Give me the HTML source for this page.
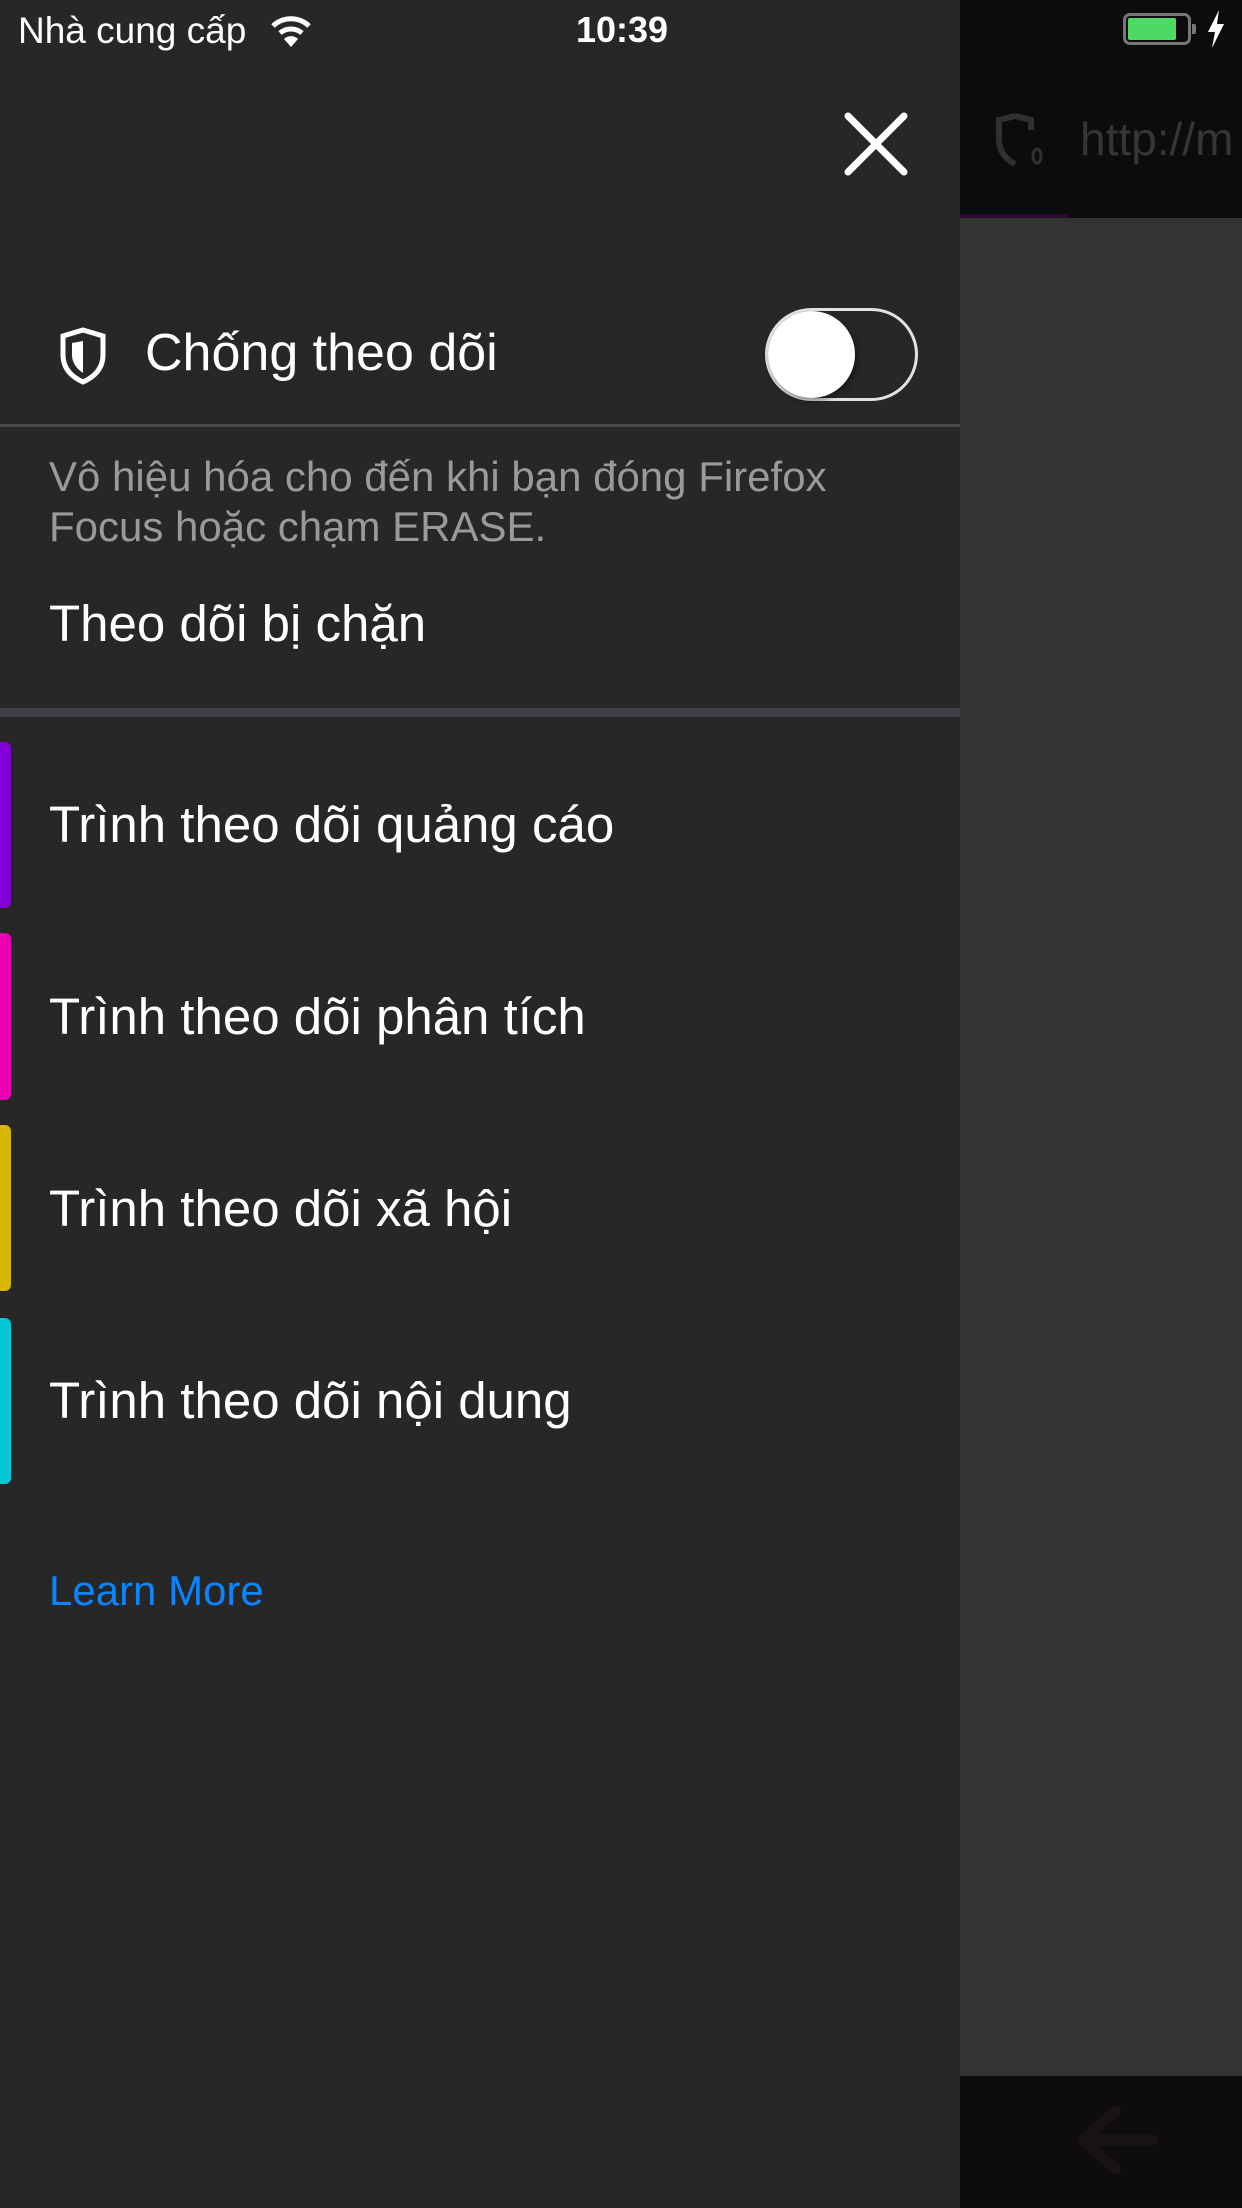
<!DOCTYPE html>
<html><head><meta charset="utf-8"><style>
*{margin:0;padding:0;box-sizing:border-box}
body{width:1242px;height:2208px;background:#272727;position:relative;overflow:hidden;font-family:"Liberation Sans","DejaVu Sans",sans-serif;color:#fff}
.a{position:absolute;white-space:nowrap}
</style></head><body>
<div class="a" style="left:960px;top:0;width:282px;height:218px;background:#0c0b0e"></div>
<div class="a" style="left:960px;top:214px;width:110px;height:12px;background:#2c0a30;border-radius:0 6px 6px 0"></div>
<div class="a" style="left:960px;top:218px;width:282px;height:1858px;background:#333"></div>
<div class="a" style="left:960px;top:2076px;width:282px;height:132px;background:#0f0c0f"></div>
<svg class="a" style="left:1075px;top:2105px" width="85" height="70"><path d="M40 6 L8 35 L40 64 M8 35 L77 35" stroke="#171317" stroke-width="11" fill="none" stroke-linecap="round" stroke-linejoin="round"/></svg>
<svg class="a" style="left:995px;top:112px" width="50" height="56"><path d="M20 4 L36 8 L36 18 M20 4 L4 8 L4 28 C4 40 12 48 20 52" stroke="#303030" stroke-width="6" fill="none"/><ellipse cx="42" cy="44" rx="4" ry="7" stroke="#303030" stroke-width="3" fill="none"/></svg>
<div class="a" style="left:1080px;top:112px;font-size:46px;color:#363636">http://m</div>
<div class="a" style="left:18px;top:10px;font-size:37px">Nhà cung cấp</div>
<svg class="a" style="left:270px;top:14px" width="42" height="34"><path d="M3 12 A26 26 0 0 1 39 12" stroke="#fff" stroke-width="5" fill="none"/><path d="M10 19 A17 17 0 0 1 32 19" stroke="#fff" stroke-width="5" fill="none"/><path d="M21 33 L14 25 A10 10 0 0 1 28 25 Z" fill="#fff"/></svg>
<div class="a" style="left:576px;top:9px;font-size:36px;font-weight:bold">10:39</div>
<div class="a" style="left:1123px;top:13px;width:68px;height:32px;border:3px solid #777;border-radius:7px"></div>
<div class="a" style="left:1128px;top:18px;width:48px;height:22px;background:#4cd964;border-radius:2px"></div>
<div class="a" style="left:1192px;top:24px;width:4px;height:10px;background:#777;border-radius:0 2px 2px 0"></div>
<svg class="a" style="left:1206px;top:10px" width="20" height="38"><path d="M13 0 L2 22 L9 22 L6 38 L18 14 L11 14 Z" fill="#fff"/></svg>
<svg class="a" style="left:843px;top:111px" width="66" height="66"><path d="M5 5 L61 61 M61 5 L5 61" stroke="#fff" stroke-width="7" stroke-linecap="round"/></svg>
<svg class="a" style="left:58px;top:327px" width="50" height="58"><path d="M25 3 L45 9 L45 28 C45 42 36 50 25 55 C14 50 5 42 5 28 L5 9 Z" stroke="#fff" stroke-width="5" fill="none"/><path d="M25 14 L25 46 C19 42 14 36 14 28 L14 16 Z" fill="#fff"/></svg>
<div class="a" style="left:145px;top:323px;font-size:52px">Chống theo dõi</div>
<div class="a" style="left:765px;top:308px;width:153px;height:93px;border:3px solid #e3e3e3;border-radius:47px;background:#272727"></div>
<div class="a" style="left:768px;top:311px;width:87px;height:87px;border-radius:50%;background:#fff;box-shadow:2px 3px 6px rgba(0,0,0,.4)"></div>
<div class="a" style="left:0;top:424px;width:960px;height:3px;background:#48484c"></div>
<div class="a" style="left:49px;top:452px;font-size:42px;line-height:50px;color:#9a9a9a;white-space:normal;width:860px">Vô hiệu hóa cho đến khi bạn đóng Firefox Focus hoặc chạm ERASE.</div>
<div class="a" style="left:49px;top:594px;font-size:51px">Theo dõi bị chặn</div>
<div class="a" style="left:0;top:708px;width:960px;height:9px;background:#3e3e44"></div>
<div class="a" style="left:0;top:742px;width:11px;height:166px;background:#8000d7;border-radius:0 6px 6px 0"></div>
<div class="a" style="left:49px;top:795px;font-size:51px">Trình theo dõi quảng cáo</div>
<div class="a" style="left:0;top:933px;width:11px;height:167px;background:#ed00b5;border-radius:0 6px 6px 0"></div>
<div class="a" style="left:49px;top:987px;font-size:51px">Trình theo dõi phân tích</div>
<div class="a" style="left:0;top:1125px;width:11px;height:166px;background:#d7b600;border-radius:0 6px 6px 0"></div>
<div class="a" style="left:49px;top:1179px;font-size:51px">Trình theo dõi xã hội</div>
<div class="a" style="left:0;top:1318px;width:11px;height:166px;background:#00c8d7;border-radius:0 6px 6px 0"></div>
<div class="a" style="left:49px;top:1371px;font-size:51px">Trình theo dõi nội dung</div>
<div class="a" style="left:49px;top:1567px;font-size:42px;color:#0a84ff">Learn More</div>
</body></html>
